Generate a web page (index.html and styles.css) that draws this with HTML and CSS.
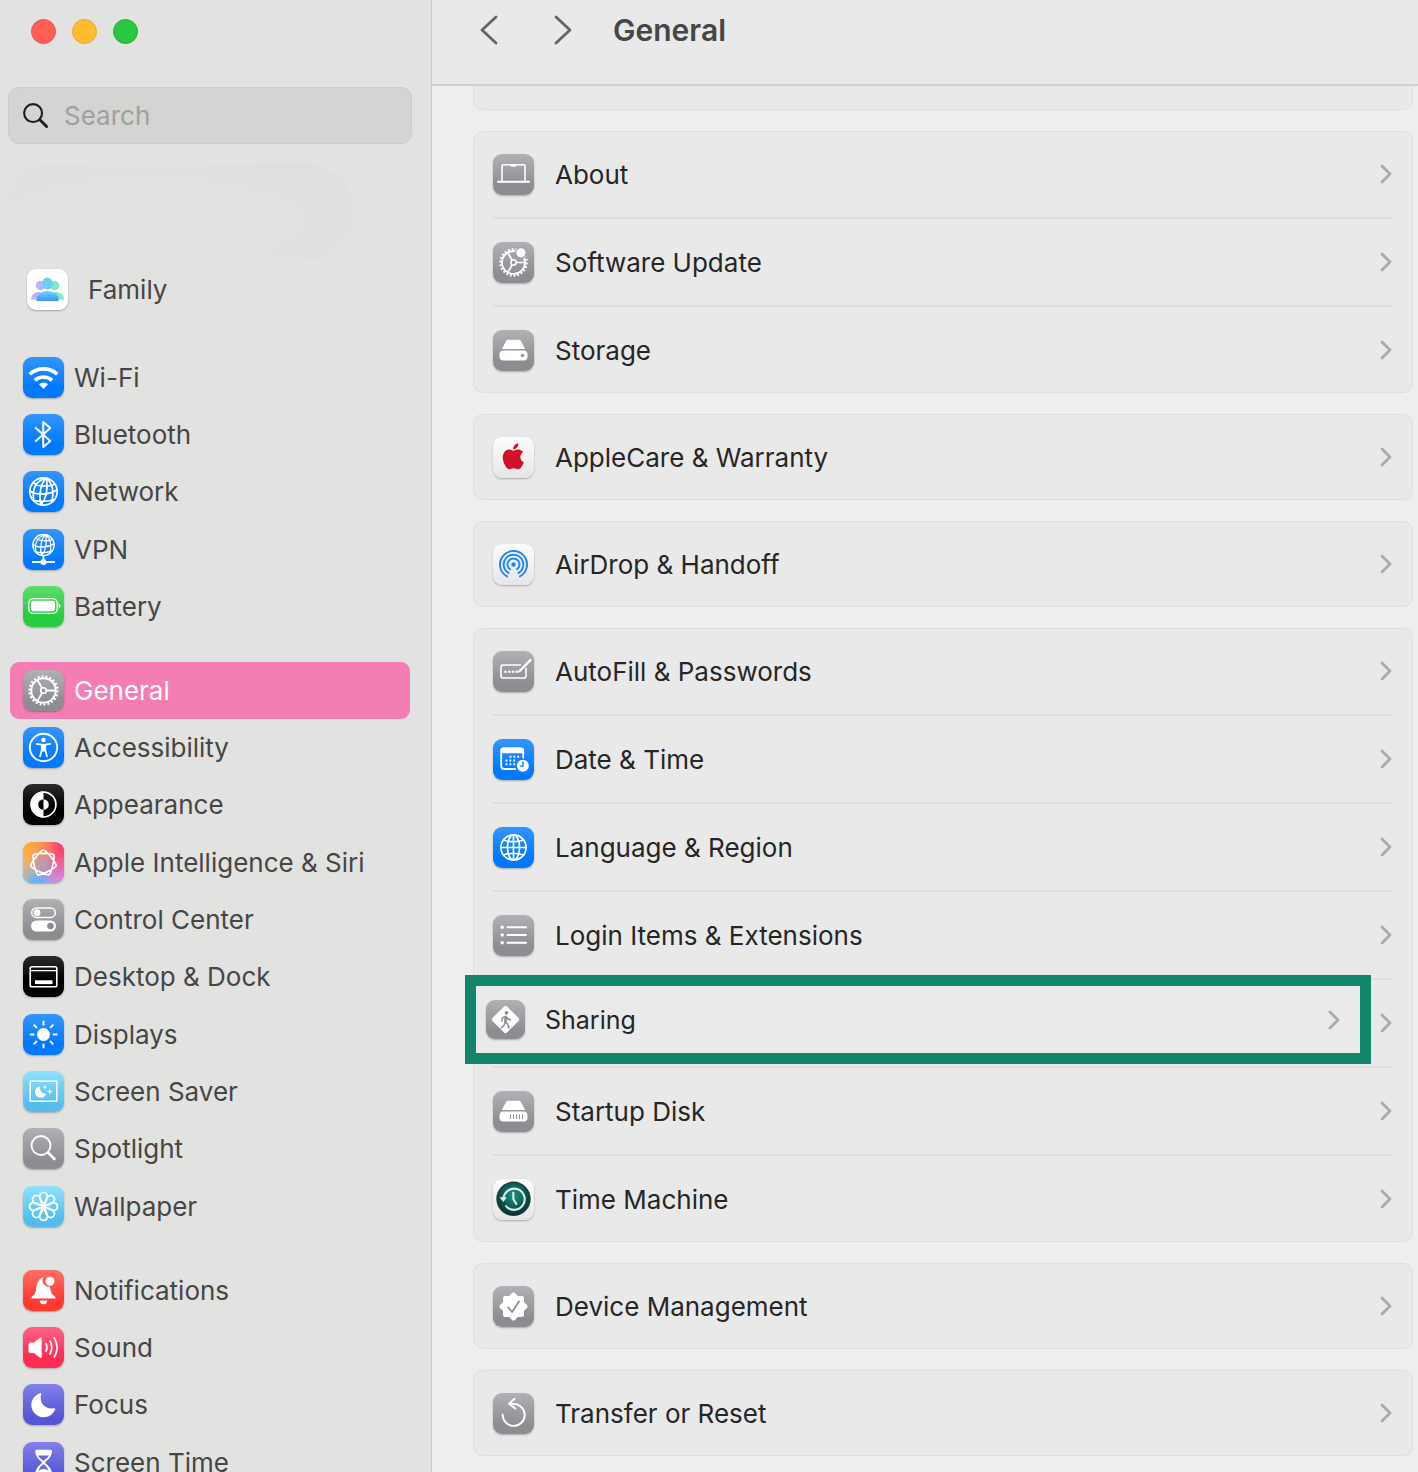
FILE: index.html
```html
<!DOCTYPE html>
<html lang="en">
<head>
<meta charset="utf-8">
<meta name="viewport" content="width=device-width, initial-scale=1">
<title>General</title>
<link rel="stylesheet" href="styles.css">
</head>
<body>
<svg class="sprite" aria-hidden="true">
  <defs>
    <linearGradient id="fam-mid" x1="0" y1="0" x2="0" y2="1"><stop offset="0" stop-color="#6fd6f7"/><stop offset="1" stop-color="#3f8ffb"/></linearGradient>
    <radialGradient id="tm-face" cx=".5" cy=".4" r=".6"><stop offset="0" stop-color="#1c9384"/><stop offset=".6" stop-color="#0e5c55"/><stop offset="1" stop-color="#0a2f30"/></radialGradient>
    <g id="gear-shape" fill="none" stroke="#fff">
      <circle r="12.2" stroke-width="1.9"/>
      <circle r="14" stroke-width="2.4" pathLength="44" stroke-dasharray="1 1"/>
      <circle r="2.8" stroke-width="1.6"/>
      <path d="M2.8 0H12M-1.4-2.4L-6.1-10.5M-1.4 2.4L-6.1 10.5" stroke-width="1.8"/>
    </g>
    <g id="globe-tilted" fill="none" stroke="#fff" stroke-width="1.7">
      <circle r="13.7"/>
      <path d="M3-13.4C-3-9-5 4-2.5 13.4M3-13.4C-8-11-12-2-9.5 9.8M3-13.4C4-6 4 6-2.5 13.4M3-13.4C9-8 11 0 8 11M-10.5-8.6C-4-4.5 5-5 11.5-7.3M-13.6-.5C-6 4.5 6 3 13.4-1.5M-10.5 8.6C-4 10.5 4 10 11 8"/>
    </g>
    <path id="petal" d="M0 0C-1.8-3.500-4.600-7-3.700-11A3.800 3.800 0 0 1 3.700-11C4.600-7 1.800-3.500 0 0" fill="none" stroke="#fff" stroke-width="1.600"/>
  </defs>
  <symbol id="i-family" viewBox="0 0 41 41">
    <g fill="#b9b4f8"><circle cx="13.500" cy="16.500" r="4.700"/><path d="M4 30.500c0-5 4-7.500 9-7.500l3 7.500z"/></g>
    <g fill="#7eeac8"><circle cx="27.500" cy="16.500" r="4.700"/><path d="M37 30.500c0-5-4-7.500-9-7.500l-3 7.500z"/></g>
    <ellipse cx="20.500" cy="14.500" rx="5.300" ry="5.900" fill="#6bcff8"/>
    <path d="M9.500 32c-1-6 5-10 11-10s12 4 11 10z" fill="url(#fam-mid)"/>
  </symbol>
  <symbol id="i-wifi" viewBox="0 0 41 41">
    <g fill="none" stroke="#fff" stroke-width="3.600"><path d="M6.700 17.300a20.300 20.300 0 0 1 27.600 0"/><path d="M11.900 23.300a13 13 0 0 1 17.200 0"/></g>
    <path d="M16 27.300a6.500 6.500 0 0 1 9 0L20.500 32z" fill="#fff"/>
  </symbol>
  <symbol id="i-bluetooth" viewBox="0 0 41 41"><path d="M12.800 14L27.300 27 20.200 33V8l7.100 6L12.800 27" fill="none" stroke="#fff" stroke-width="2" stroke-linejoin="round" stroke-linecap="round"/></symbol>
  <symbol id="i-network" viewBox="0 0 41 41"><use href="#globe-tilted" transform="translate(20.500 20.500)"/></symbol>
  <symbol id="i-vpn" viewBox="0 0 41 41"><use href="#globe-tilted" transform="translate(20.500 16) scale(.78)"/><path d="M20.500 26v7M9 33h23" stroke="#fff" stroke-width="1.900"/><circle cx="20.500" cy="33" r="3" fill="#fff"/></symbol>
  <symbol id="i-battery" viewBox="0 0 41 41"><rect x="5.800" y="12.600" width="28.400" height="14.800" rx="4.500" fill="none" stroke="#fff" stroke-width="1.300"/><rect x="8" y="14.800" width="24" height="10.400" rx="2.500" fill="#fff"/><path d="M35.600 17.500c2.600 1 2.600 4 0 5z" fill="#fff"/></symbol>
  <symbol id="i-gear" viewBox="0 0 41 41"><use href="#gear-shape" transform="translate(20.500 20.500)"/></symbol>
  <symbol id="i-access" viewBox="0 0 41 41"><circle cx="20.500" cy="20.500" r="13.700" fill="none" stroke="#fff" stroke-width="1.900"/><circle cx="20.500" cy="13" r="2.200" fill="#fff"/><path d="M13.800 16.800l5 .8v5.200l-1.700 6.500M27.200 16.800l-5 .8v5.200l1.700 6.500" fill="none" stroke="#fff" stroke-width="1.700" stroke-linecap="round" stroke-linejoin="round"/><path d="M18 17h5v6l-.8 1.500h-3.400l-.8-1.500z" fill="#fff"/></symbol>
  <symbol id="i-appearance" viewBox="0 0 41 41"><circle cx="20.500" cy="20.500" r="12.400" fill="none" stroke="#fff" stroke-width="1.700"/><path d="M20.500 7.500a13 13 0 0 0 0 26v-7.700a5.300 5.300 0 0 1 0-10.600zM20.500 15.200a5.300 5.300 0 0 1 0 10.600z" fill="#fff"/></symbol>
  <symbol id="i-siri" viewBox="0 0 41 41"><path transform="translate(20.500 21)" d="M0-13C2.500-13 13.230.45 12.670 2.890C12.110 5.330-3.390 12.790-5.640 11.710C-7.890 10.630-11.720-6.160-10.160-8.110C-8.600-10.060 8.600-10.060 10.160-8.110C11.720-6.160 7.890 10.630 5.640 11.710C3.390 12.790-12.110 5.330-12.670 2.890C-13.230.45-2.500-13 0-13Z" fill="none" stroke="#fff" stroke-width="1.700"/></symbol>
  <symbol id="i-control" viewBox="0 0 41 41"><rect x="8.700" y="8.900" width="23.600" height="9.600" rx="4.800" fill="none" stroke="#fff" stroke-width="1.500"/><circle cx="14" cy="13.700" r="3.400" fill="#fff"/><rect x="8" y="21.500" width="25" height="11" rx="5.500" fill="#fff"/><circle cx="27.500" cy="27" r="3.300" fill="#8e8d92"/></symbol>
  <symbol id="i-dock" viewBox="0 0 41 41"><rect x="7.200" y="10.700" width="26.600" height="20" rx="1.800" fill="none" stroke="#fff" stroke-width="1.600"/><path d="M7 14.600h27" stroke="#fff" stroke-width="1.400"/><rect x="12" y="24.300" width="17.500" height="3.800" fill="#fff"/></symbol>
  <symbol id="i-sun" viewBox="0 0 41 41"><circle cx="20.500" cy="20.500" r="6.500" fill="#fff"/><path d="M20.500 7.500v3M20.500 30.500v3M7.500 20.500h3M30.500 20.500h3M11.300 11.300l2.100 2.100M27.600 27.600l2.100 2.100M11.300 29.700l2.100-2.100M27.600 13.400l2.100-2.100" stroke="#fff" stroke-width="2" stroke-linecap="round"/></symbol>
  <symbol id="i-saver" viewBox="0 0 41 41"><rect x="7.200" y="10.200" width="26.600" height="20" fill="none" stroke="#fff" stroke-width="1.500"/><path d="M17.300 15.300a5.700 5.700 0 1 0 5.900 7.400a5.600 5.600 0 0 1-5.900-7.400z" fill="#fff"/><path d="M21.800 13.500l.7 1.900 1.900.7-1.900.7-.7 1.900-.7-1.900-1.900-.7 1.900-.7zM26.700 17.500l.9 2.300 2.300.9-2.300.9-.9 2.300-.9-2.300-2.300-.9 2.300-.9z" fill="#fff"/></symbol>
  <symbol id="i-spot" viewBox="0 0 41 41"><circle cx="18" cy="17.500" r="9.500" fill="none" stroke="#fff" stroke-width="1.800"/><path d="M25 24.500l6.500 6.500" stroke="#fff" stroke-width="2.600" stroke-linecap="round"/></symbol>
  <symbol id="i-flower" viewBox="0 0 41 41"><g transform="translate(20.500 20.500)"><use href="#petal"/><use href="#petal" transform="rotate(45)"/><use href="#petal" transform="rotate(90)"/><use href="#petal" transform="rotate(135)"/><use href="#petal" transform="rotate(180)"/><use href="#petal" transform="rotate(225)"/><use href="#petal" transform="rotate(270)"/><use href="#petal" transform="rotate(315)"/></g></symbol>
  <symbol id="i-bell" viewBox="0 0 41 41"><path d="M20.500 7.300a6 6 0 0 0 6.300 9.200c1 3.500.8 6.500 3.500 8.500 1.200 1 2.200 2 2.200 3.500H8.500c0-1.500 1-2.500 2.200-3.500 3-2.500 1.800-7 3.700-12 1.200-3.200 3.300-5.200 6.100-5.700z" fill="#fff"/><circle cx="27" cy="11.300" r="4.500" fill="#fff"/><path d="M16.800 30.500h7.400a3.700 3.700 0 0 1-7.400 0z" fill="#fff"/></symbol>
  <symbol id="i-sound" viewBox="0 0 41 41"><path d="M5.500 17.500q0-2 2-2h3.500l6-4.800q1.700-1 1.700 1v18q0 2-1.700 1l-6-4.800H7.500q-2 0-2-2z" fill="#fff"/><path d="M23 16.700q2 3.800 0 7.600M27 14q3.500 6.500 0 13M31.300 10.800q5.500 9.700 0 19.400" fill="none" stroke="#fff" stroke-width="1.700" stroke-linecap="round"/></symbol>
  <symbol id="i-moon" viewBox="0 0 41 41"><path d="M17 9.200c.8-.4 1.500.1 1.200 1-2.500 8.500 4 16 12.800 14 1-.2 1.500.3 1.100 1.200A12.300 12.300 0 1 1 17 9.200z" fill="#fff"/></symbol>
  <symbol id="i-hourglass" viewBox="0 0 41 41"><path d="M12.300 9q0-1.300 1.300-1.300h14q1.300 0 1.300 1.300c0 5-3 8-6.500 10.800v1.500c3.500 2.700 6.500 5.700 6.500 10.700q0 1.300-1.300 1.300h-14q-1.300 0-1.300-1.300c0-5 3-8 6.500-10.700v-1.500c-3.500-2.800-6.500-5.800-6.500-10.800z" fill="#fff"/><path d="M15 13.500h11q-1.500 3-5.500 5.500-4-2.500-5.500-5.500zM20.500 22q3.500 2.500 5 6.500-5-3-10 0 1.500-4 5-6.500z" fill="#6c69dc"/></symbol>
  <symbol id="i-laptop" viewBox="0 0 41 41"><path d="M9 27V12.200q0-1.500 1.500-1.500h20q1.500 0 1.500 1.500V27" fill="none" stroke="#fff" stroke-width="1.600"/><path d="M17.500 10.500h6v1q0 1.200-1.200 1.200h-3.600q-1.200 0-1.200-1.200z" fill="#fff"/><path d="M5 27.800h31" stroke="#fff" stroke-width="2" stroke-linecap="round"/></symbol>
  <symbol id="i-update" viewBox="0 0 41 41"><use href="#gear-shape" transform="translate(20.500 20.500) scale(.94)"/><circle cx="28" cy="10.800" r="6" fill="#a4a3a8"/><circle cx="28" cy="10.800" r="4.600" fill="#fff"/></symbol>
  <symbol id="i-disk" viewBox="0 0 41 41"><path d="M13 11q.8-1.300 2.300-1.300h10.400q1.500 0 2.300 1.300l4.200 8H8.800z" fill="#fff"/><rect x="6.500" y="20.500" width="28" height="10" rx="4" fill="#fff"/><circle cx="29.500" cy="25.500" r="1.700" fill="#939297"/></symbol>
  <symbol id="i-startup" viewBox="0 0 41 41"><path d="M13 11q.8-1.300 2.300-1.300h10.400q1.500 0 2.300 1.300l4.200 8H8.800z" fill="#fff"/><rect x="6.500" y="20.500" width="28" height="10" rx="4" fill="#fff"/><path d="M17.500 23.500v4.500M20.500 23.500v4.500M23.500 23.500v4.500M26.500 23.500v4.500M29.500 23.500v4.500" stroke="#939297" stroke-width="1"/></symbol>
  <symbol id="i-apple" viewBox="0 0 41 41"><path transform="translate(7.300 6.300) scale(1.080)" fill="#d0112b" d="M12.152 6.896c-.948 0-2.415-1.078-3.960-1.040-2.040.027-3.910 1.183-4.961 3.014-2.117 3.675-.546 9.103 1.519 12.090 1.013 1.454 2.208 3.090 3.792 3.039 1.520-.065 2.090-.987 3.935-.987 1.831 0 2.350.987 3.960.948 1.637-.026 2.676-1.480 3.676-2.948 1.156-1.688 1.636-3.325 1.662-3.415-.039-.013-3.182-1.221-3.220-4.857-.026-3.040 2.480-4.494 2.597-4.559-1.429-2.090-3.623-2.324-4.390-2.376-2-.156-3.675 1.090-4.610 1.090zM15.530 3.830c.843-1.012 1.400-2.427 1.245-3.830-1.207.052-2.662.805-3.532 1.818-.780.896-1.454 2.338-1.273 3.714 1.338.104 2.715-.688 3.559-1.701"/></symbol>
  <symbol id="i-airdrop" viewBox="0 0 41 41"><g transform="translate(20.500 20.500)" fill="none" stroke="#2389fb" stroke-width="2" stroke-linecap="round"><path d="M-6.500 11.900A13.500 13.500 0 1 1 6.500 11.900"/><path d="M-5 8.400A9.800 9.800 0 1 1 5 8.400"/><path d="M-3.500 4.800A6 6 0 1 1 3.500 4.800"/></g><circle cx="20.500" cy="20.500" r="2.200" fill="#2389fb"/></symbol>
  <symbol id="i-autofill" viewBox="0 0 41 41"><path d="M28 14H10.300q-2.300 0-2.300 2.300v8.400q0 2.300 2.300 2.300h20.400q2.300 0 2.300-2.300V17" fill="none" stroke="#fff" stroke-width="1.600"/><path d="M26.300 20.300L35.500 11" stroke="#fff" stroke-width="2.400"/><path d="M36.300 10.200l1-1" stroke="#fff" stroke-width="2.600" stroke-linecap="round"/><path d="M24.500 22l1-2.500 1.600 1.600z" fill="#fff"/><g fill="#fff"><circle cx="12.500" cy="20.700" r="1.300"/><circle cx="16.300" cy="20.700" r="1.300"/><circle cx="20" cy="20.700" r="1.300"/><circle cx="23.600" cy="20.700" r="1.200"/></g></symbol>
  <symbol id="i-date" viewBox="0 0 41 41"><rect x="8.200" y="9.500" width="22" height="20.500" rx="3" fill="none" stroke="#fff" stroke-width="1.800"/><path d="M7.300 14.300v-2.500q0-3.200 3.200-3.200h17.400q3.200 0 3.200 3.200v2.500z" fill="#fff"/><path d="M16.500 17.800h11M12.500 21.500h11M12.500 25.300h11" stroke="#fff" stroke-width="1.900" stroke-dasharray="1.900 2"/><circle cx="29.800" cy="26.800" r="7.600" fill="#0b7ffd"/><circle cx="29.800" cy="26.800" r="6" fill="#fff"/><path d="M30 22.800v4.300h-3.300" fill="none" stroke="#0b7ffd" stroke-width="1.400"/></symbol>
  <symbol id="i-globe" viewBox="0 0 41 41"><g transform="translate(20.500 20.500)" fill="none" stroke="#fff" stroke-width="1.700"><circle r="12.600"/><ellipse rx="6" ry="12.600"/><path d="M0-12.600V12.600M-12.600 0H12.600M-10-7.500Q0-4 10-7.500M-10 7.500Q0 4 10 7.500"/></g></symbol>
  <symbol id="i-list" viewBox="0 0 41 41"><g fill="#fff"><circle cx="9.200" cy="12.300" r="1.700"/><circle cx="9.200" cy="20" r="1.700"/><circle cx="9.200" cy="27.700" r="1.700"/></g><path d="M14.500 12.300h18.500M14.500 20h18.500M14.500 27.700h18.500" stroke="#fff" stroke-width="2" stroke-linecap="round"/></symbol>
  <symbol id="i-sharing" viewBox="0 0 41 41"><rect x="9.700" y="9.700" width="21.600" height="21.600" rx="2.500" transform="rotate(45 20.500 20.500)" fill="#fff"/><circle cx="21.500" cy="13.500" r="1.900" fill="#8e8d92"/><path d="M20.800 17.500l-.8 5.300 2.800 2.500 1.200 4.200M20 22.800l-.8 3.500-3 3M20.800 17l-3.500 1.800-.8 3.200M21.300 17.800l1.800 2.200 2.700.8" fill="none" stroke="#8e8d92" stroke-width="1.600" stroke-linecap="round" stroke-linejoin="round"/><path d="M19.500 17l3 .5-.8 5.500-2.500-.5z" fill="#8e8d92"/></symbol>
  <symbol id="i-timemachine" viewBox="0 0 41 41"><circle cx="20.500" cy="19.800" r="17.200" fill="#173e40"/><circle cx="20.500" cy="19.800" r="16" fill="url(#tm-face)"/><path d="M10.500 19.500A10.600 10.600 0 1 1 12.500 26.500" fill="none" stroke="#dfeae7" stroke-width="2.100"/><path d="M6.500 18.300h7.500l-3.700 4.700z" fill="#dfeae7"/><path d="M20.300 13.500v6.500l3 5" fill="none" stroke="#dfeae7" stroke-width="2.100" stroke-linecap="round"/></symbol>
  <symbol id="i-badge" viewBox="0 0 41 41"><g fill="#fff" stroke="#fff" stroke-width="4" stroke-linejoin="round"><rect x="12" y="12" width="17" height="17"/><rect x="12" y="12" width="17" height="17" transform="rotate(45 20.500 20.500)"/></g><path d="M15.300 21.500l3.700 4.500 7-10.500" fill="none" stroke="#8e8d92" stroke-width="1.800" stroke-linecap="round" stroke-linejoin="round"/></symbol>
  <symbol id="i-reset" viewBox="0 0 41 41"><path d="M9.700 21.500A11 11 0 1 0 20.500 10.900H17" fill="none" stroke="#fff" stroke-width="1.900" stroke-linecap="round"/><path d="M21.500 5.800l-5.500 5 6.300 4.700" fill="none" stroke="#fff" stroke-width="1.900" stroke-linecap="round" stroke-linejoin="round"/></symbol>
  <symbol id="i-chevron" viewBox="0 0 12 20"><path d="M2 2l8 8-8 8" fill="none" stroke="currentColor" stroke-width="2.800" stroke-linecap="round" stroke-linejoin="round"/></symbol>
</svg>

<div class="window">
  <aside class="sidebar">
    <div class="lights">
      <button class="light light-close" aria-label="Close"></button>
      <button class="light light-min" aria-label="Minimize"></button>
      <button class="light light-zoom" aria-label="Zoom"></button>
    </div>
    <label class="search">
      <svg class="search-icon" viewBox="0 0 28 28" aria-hidden="true"><circle cx="11.500" cy="11.500" r="9.300" fill="none" stroke="#1d1d1d" stroke-width="2.200"/><path d="M18.500 18.500l7 7" stroke="#1d1d1d" stroke-width="3" stroke-linecap="round"/></svg>
      <input class="search-input" type="search" placeholder="Search" aria-label="Search">
    </label>
    <div class="account"></div>
    <nav class="nav">
      <a class="item item-family" href="#"><svg class="tile white"><use href="#i-family"/></svg>Family</a>
      <ul class="group">
        <li><a class="item" href="#"><svg class="tile blue"><use href="#i-wifi"/></svg>Wi-Fi</a></li>
        <li><a class="item" href="#"><svg class="tile blue"><use href="#i-bluetooth"/></svg>Bluetooth</a></li>
        <li><a class="item" href="#"><svg class="tile blue"><use href="#i-network"/></svg>Network</a></li>
        <li><a class="item" href="#"><svg class="tile blue"><use href="#i-vpn"/></svg>VPN</a></li>
        <li><a class="item" href="#"><svg class="tile green"><use href="#i-battery"/></svg>Battery</a></li>
      </ul>
      <ul class="group">
        <li><a class="item selected" href="#" aria-current="page"><svg class="tile gray"><use href="#i-gear"/></svg>General</a></li>
        <li><a class="item" href="#"><svg class="tile blue"><use href="#i-access"/></svg>Accessibility</a></li>
        <li><a class="item" href="#"><svg class="tile black"><use href="#i-appearance"/></svg>Appearance</a></li>
        <li><a class="item" href="#"><svg class="tile rainbow"><use href="#i-siri"/></svg>Apple Intelligence &amp; Siri</a></li>
        <li><a class="item" href="#"><svg class="tile gray"><use href="#i-control"/></svg>Control Center</a></li>
        <li><a class="item" href="#"><svg class="tile black"><use href="#i-dock"/></svg>Desktop &amp; Dock</a></li>
        <li><a class="item" href="#"><svg class="tile blue"><use href="#i-sun"/></svg>Displays</a></li>
        <li><a class="item" href="#"><svg class="tile sky"><use href="#i-saver"/></svg>Screen Saver</a></li>
        <li><a class="item" href="#"><svg class="tile gray"><use href="#i-spot"/></svg>Spotlight</a></li>
        <li><a class="item" href="#"><svg class="tile sky"><use href="#i-flower"/></svg>Wallpaper</a></li>
      </ul>
      <ul class="group">
        <li><a class="item" href="#"><svg class="tile red"><use href="#i-bell"/></svg>Notifications</a></li>
        <li><a class="item" href="#"><svg class="tile pink"><use href="#i-sound"/></svg>Sound</a></li>
        <li><a class="item" href="#"><svg class="tile indigo"><use href="#i-moon"/></svg>Focus</a></li>
        <li><a class="item" href="#"><svg class="tile indigo"><use href="#i-hourglass"/></svg>Screen Time</a></li>
      </ul>
    </nav>
  </aside>

  <main class="main">
    <header class="toolbar">
      <button class="nav-button" aria-label="Back"><svg viewBox="0 0 18 30"><path d="M16 2L2 15l14 13" fill="none" stroke="currentColor" stroke-width="2.800" stroke-linecap="round" stroke-linejoin="round"/></svg></button>
      <button class="nav-button" aria-label="Forward"><svg viewBox="0 0 18 30"><path d="M2 2l14 13L2 28" fill="none" stroke="currentColor" stroke-width="2.800" stroke-linecap="round" stroke-linejoin="round"/></svg></button>
      <h1 class="title">General</h1>
    </header>
    <div class="content">
      <div class="card card-scrolled"></div>
      <section class="card">
        <button class="row"><svg class="tile gray"><use href="#i-laptop"/></svg><span class="label">About</span><svg class="chevron"><use href="#i-chevron"/></svg></button>
        <button class="row"><svg class="tile gray"><use href="#i-update"/></svg><span class="label">Software Update</span><svg class="chevron"><use href="#i-chevron"/></svg></button>
        <button class="row"><svg class="tile gray"><use href="#i-disk"/></svg><span class="label">Storage</span><svg class="chevron"><use href="#i-chevron"/></svg></button>
      </section>
      <section class="card">
        <button class="row"><svg class="tile pearl"><use href="#i-apple"/></svg><span class="label">AppleCare &amp; Warranty</span><svg class="chevron"><use href="#i-chevron"/></svg></button>
      </section>
      <section class="card">
        <button class="row"><svg class="tile pearl"><use href="#i-airdrop"/></svg><span class="label">AirDrop &amp; Handoff</span><svg class="chevron"><use href="#i-chevron"/></svg></button>
      </section>
      <section class="card">
        <button class="row"><svg class="tile gray"><use href="#i-autofill"/></svg><span class="label">AutoFill &amp; Passwords</span><svg class="chevron"><use href="#i-chevron"/></svg></button>
        <button class="row"><svg class="tile blue"><use href="#i-date"/></svg><span class="label">Date &amp; Time</span><svg class="chevron"><use href="#i-chevron"/></svg></button>
        <button class="row"><svg class="tile blue"><use href="#i-globe"/></svg><span class="label">Language &amp; Region</span><svg class="chevron"><use href="#i-chevron"/></svg></button>
        <button class="row"><svg class="tile gray"><use href="#i-list"/></svg><span class="label">Login Items &amp; Extensions</span><svg class="chevron"><use href="#i-chevron"/></svg></button>
        <div class="row row-marked">
          <button class="callout"><svg class="tile tile-small gray"><use href="#i-sharing"/></svg><span class="label">Sharing</span><svg class="chevron"><use href="#i-chevron"/></svg></button>
          <svg class="chevron"><use href="#i-chevron"/></svg>
        </div>
        <button class="row"><svg class="tile gray"><use href="#i-startup"/></svg><span class="label">Startup Disk</span><svg class="chevron"><use href="#i-chevron"/></svg></button>
        <button class="row"><svg class="tile pearl"><use href="#i-timemachine"/></svg><span class="label">Time Machine</span><svg class="chevron"><use href="#i-chevron"/></svg></button>
      </section>
      <section class="card">
        <button class="row"><svg class="tile gray"><use href="#i-badge"/></svg><span class="label">Device Management</span><svg class="chevron"><use href="#i-chevron"/></svg></button>
      </section>
      <section class="card">
        <button class="row"><svg class="tile gray"><use href="#i-reset"/></svg><span class="label">Transfer or Reset</span><svg class="chevron"><use href="#i-chevron"/></svg></button>
      </section>
    </div>
  </main>
</div>
</body>
</html>
```
FILE: styles.css
```css
* { box-sizing: border-box; }

body {
  margin: 0;
  font-family: Inter, "Liberation Sans", sans-serif;
  font-size: 26px;
  color: #262626;
  background: #eeeeee;
}

button {
  font: inherit;
  color: inherit;
  background: none;
  border: 0;
  padding: 0;
  text-align: left;
}

a { color: inherit; text-decoration: none; }

.sprite { position: absolute; width: 0; height: 0; }

.window { display: flex; height: 100vh; overflow: hidden; }

/* Sidebar */
.sidebar {
  flex: none;
  width: 432px;
  padding: 19px 19px 0 8px;
  overflow: hidden;
  color: #464646;
  background: #e2e2e0;
  border-right: 1px solid #cbcbca;
}

.lights { display: flex; gap: 16px; padding-left: 23px; }
.light { width: 25px; height: 25px; border-radius: 50%; }
.light-close { background: #ff5f57; border: 1px solid #ee4f48; }
.light-min { background: #febc2e; border: 1px solid #eba926; }
.light-zoom { background: #28c840; border: 1px solid #1fb534; }

.search {
  display: flex;
  align-items: center;
  gap: 15px;
  height: 57px;
  margin-top: 43px;
  padding: 0 13px;
  background: #d4d4d3;
  border: 1px solid #cbcbca;
  border-radius: 11px;
}
.search-icon { flex: none; width: 27px; height: 27px; }
.search-input {
  flex: 1;
  min-width: 0;
  padding: 0;
  font: inherit;
  color: #262626;
  background: none;
  border: 0;
  outline: 0;
  appearance: none;
}
.search-input::placeholder { color: #a0a09f; opacity: 1; }

.account {
  width: 349px;
  height: 98px;
  margin: 19px 0 0 -4px;
  border-radius: 49px;
  background: radial-gradient(ellipse at 42% 60%, #e2e2e1 0%, #e1e1e0 45%, #dfdfde 100%);
}

.group { margin: 0 0 27px; padding: 0; list-style: none; }
.group li:nth-child(3n) { padding-bottom: 1px; }

.item {
  display: flex;
  align-items: center;
  gap: 10px;
  height: 57px;
  margin: 0 2px;
  padding-left: 13px;
  border-radius: 9px;
}
.item.selected { color: #ffffff; background: #f47eb3; }
.item-family { gap: 20px; margin-bottom: 31px; padding-left: 17px; }

/* Icon tiles */
.tile {
  flex: none;
  width: 41px;
  height: 41px;
  border-radius: 9px;
  box-shadow: 0 1px 2px rgba(0, 0, 0, 0.28);
}
.tile-small { width: 39px; height: 39px; }
.white { background: #ffffff; }
.pearl { background: linear-gradient(#fcfcfc, #e6e6e6); }
.blue { background: linear-gradient(#3395ff, #0079ff 75%); }
.green { background: linear-gradient(#5ddd6c, #27cc40 75%); }
.gray { background: linear-gradient(#b1b0b5, #8d8c91 80%); }
.black { background: linear-gradient(#2b2b2b, #000000 60%); }
.sky { background: linear-gradient(#8de2fd, #54bdee 80%); }
.red { background: linear-gradient(#ff6f65, #ff3a2f 75%); }
.pink { background: linear-gradient(#ff6085, #ff2d55 75%); }
.indigo { background: linear-gradient(#8280e8, #5755d5 80%); }
.rainbow {
  background:
    radial-gradient(circle at 50% 50%, rgba(175, 160, 190, 0.8) 0%, rgba(175, 160, 190, 0) 45%),
    radial-gradient(circle at 0% 0%, #fdad22 0%, rgba(253, 173, 34, 0) 65%),
    radial-gradient(circle at 100% 5%, #ff2a62 0%, rgba(255, 42, 98, 0) 75%),
    radial-gradient(circle at 100% 85%, #d493fd 0%, rgba(212, 147, 253, 0) 60%),
    radial-gradient(circle at 45% 100%, #33b9fb 0%, rgba(51, 185, 251, 0) 60%),
    #f3b3a4;
}

/* Main pane */
.main { display: flex; flex: 1; flex-direction: column; min-width: 0; }

.toolbar {
  display: flex;
  flex: none;
  align-items: center;
  height: 86px;
  padding: 0 48px 24px;
  color: #464646;
  background: #e9e9e9;
  border-bottom: 2px solid #d0d0d0;
}
.nav-button { width: 18px; height: 30px; margin-right: 56px; color: #646464; }
.nav-button + .title { margin-left: -15px; }
.nav-button svg { display: block; width: 18px; height: 30px; }
.title { margin: 0; font-size: 30px; font-weight: 600; }

.content {
  display: flex;
  flex: 1;
  flex-direction: column;
  gap: 21px;
  padding: 0 5px 18px 41px;
  overflow: hidden;
}

.card {
  flex: none;
  padding: 0 21px 0 20px;
  background: #e9e9e9;
  border-radius: 10px;
  box-shadow: inset 0 0 0 1px #dfdfdf;
}
.card-scrolled {
  height: 24px;
  border: 1px solid #dfdfdf;
  border-top: 0;
  border-radius: 0 0 10px 10px;
  box-shadow: none;
}

.row {
  display: flex;
  align-items: center;
  gap: 21px;
  width: 100%;
  height: 86px;
}
.row + .row { height: 88px; border-top: 2px solid #dfdfdf; }
.label { flex: 1; }
.chevron { flex: none; width: 12px; height: 20px; color: #aaaaaa; }

.row-marked { position: relative; justify-content: flex-end; }

/* Callout frame drawn over its row */
.callout {
  position: absolute;
  top: -5px;
  right: 21px;
  left: -28px;
  display: flex;
  align-items: center;
  gap: 20px;
  height: 89px;
  padding: 0 20px 0 10px;
  font-size: 25px;
  background: #eaeaea;
  border: 11px solid #11866b;
}
```
